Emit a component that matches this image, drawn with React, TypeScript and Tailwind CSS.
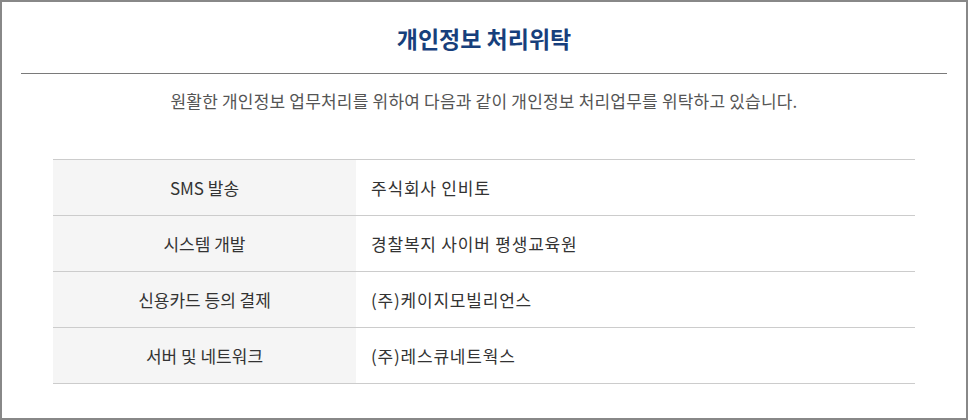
const ROWS = [
  { task: "SMS 발송", company: "주식회사 인비토" },
  { task: "시스템 개발", company: "경찰복지 사이버 평생교육원" },
  { task: "신용카드 등의 결제", company: "(주)케이지모빌리언스" },
  { task: "서버 및 네트워크", company: "(주)레스큐네트웍스" },
];

export default function App() {
  return (
    <div
      className="w-[968px] h-[420px] border-2 border-[#888] bg-white px-[19px]"
      style={{ fontFamily: '"Noto Sans CJK KR", "Noto Sans", sans-serif' }}
    >
      {/* Title */}
      <h2 className="h-[72px] flex items-center justify-center pt-[1px] border-b border-[#7a7a7a] text-[23px] font-bold text-[#173f7c]">
        개인정보 처리위탁
      </h2>

      <p className="mt-[15px] text-center text-[17px] leading-[24px] text-[#555] tracking-[0.2px]">
        원활한 개인정보 업무처리를 위하여 다음과 같이 개인정보 처리업무를 위탁하고 있습니다.
      </p>

      {/* Table */}
      <div className="mx-8 mt-[46px] border-t border-[#ccc]">
        {ROWS.map((r) => (
          <div key={r.task} className="flex h-[56px] border-b border-[#ccc] text-[17px] text-[#333]">
            <div className="w-[303px] bg-[#f5f5f5] flex items-center justify-center">{r.task}</div>
            <div className="flex-1 flex items-center pl-[15px] tracking-[0.8px]">{r.company}</div>
          </div>
        ))}
      </div>
    </div>
  );
}
